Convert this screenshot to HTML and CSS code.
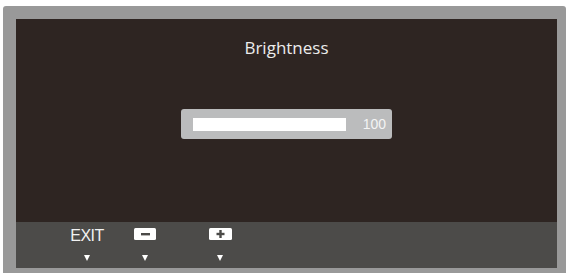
FILE: index.html
```html
<!DOCTYPE html>
<html>
<head>
<meta charset="utf-8">
<link rel="stylesheet" href="styles.css">
</head>
<body>
<div class="frame">
  <div class="screen">
    <div class="title">Brightness</div>
    <div class="slider">
      <div class="track"><div class="fill" style="width:100%"></div></div>
      <span class="value">100</span>
    </div>
  </div>
  <div class="bar">
    <div class="btn exit">
      <span class="label">EXIT</span>
      <span class="tri"></span>
    </div>
    <div class="btn minus">
      <span class="key"><svg width="22" height="12" viewBox="0 0 22 12"><rect x="0" y="0" width="22" height="12" rx="1.5" fill="#ffffff"/><rect x="7" y="5" width="9" height="2.4" fill="#4b4a48"/></svg></span>
      <span class="tri"></span>
    </div>
    <div class="btn plus">
      <span class="key"><svg width="23" height="12" viewBox="0 0 23 12"><rect x="0" y="0" width="23" height="12" rx="1.5" fill="#ffffff"/><rect x="7.5" y="4.8" width="8" height="2.4" fill="#4b4a48"/><rect x="10.3" y="2" width="2.4" height="8" fill="#4b4a48"/></svg></span>
      <span class="tri"></span>
    </div>
  </div>
</div>
</body>
</html>
```

FILE: styles.css
```css
html, body {
  margin: 0;
  padding: 0;
  background: #ffffff;
  overflow: hidden;
}
body {
  width: 568px;
  height: 273px;
}
.frame {
  margin: 6px 0 0 3px;
  width: 563px;
  height: 267px;
  box-sizing: border-box;
  background: #999999;
  border-radius: 3px 3px 0 0;
  padding: 13px 9px 5px 13px;
  display: flex;
  flex-direction: column;
}
.screen {
  height: 203px;
  background: #2e2522;
  display: flex;
  flex-direction: column;
  align-items: center;
}
.title {
  margin-top: 18px;
  font-family: "Open Sans", "Noto Sans", sans-serif;
  font-size: 17px;
  line-height: 22px;
  color: #ececec;
}
.slider {
  margin-top: 50px;
  width: 211px;
  height: 30px;
  box-sizing: border-box;
  background: #bbbcbd;
  border-radius: 3px;
  display: flex;
  align-items: center;
  padding: 0 6px 0 12px;
}
.track {
  width: 153px;
  height: 13px;
}
.fill {
  height: 100%;
  background: #ffffff;
}
.value {
  margin-left: auto;
  font-family: "Liberation Sans", Arial, sans-serif;
  font-size: 14px;
  color: #f4f4f4;
}
.bar {
  height: 46px;
  background: #4c4b49;
  display: flex;
}
.btn {
  display: flex;
  flex-direction: column;
  align-items: center;
  width: 40px;
}
.exit { margin-left: 51px; }
.minus { margin-left: 18px; }
.plus { margin-left: 35px; }
.label {
  margin-top: 5px;
  font-family: "Liberation Sans Narrow", "Liberation Sans", Arial, sans-serif;
  font-size: 16px;
  line-height: 18px;
  color: #f2f2f2;
  letter-spacing: -0.5px;
}
.key {
  display: block;
  margin-top: 6px;
  height: 12px;
  line-height: 0;
}
.exit .tri { margin-top: 10px; }
.tri {
  margin-top: 15px;
  width: 0;
  height: 0;
  border-left: 3px solid transparent;
  border-right: 3px solid transparent;
  border-top: 6px solid #ffffff;
}
```
